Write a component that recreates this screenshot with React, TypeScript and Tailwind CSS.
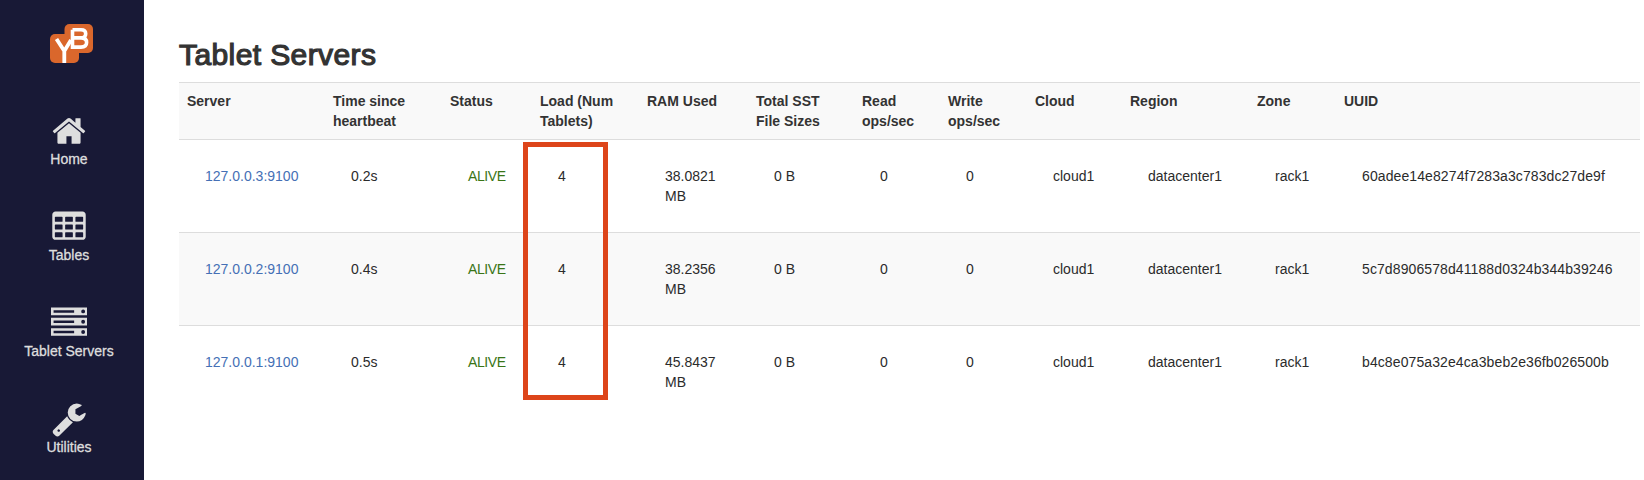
import React from "react";

const HOME =
  "M1472 992v480q0 26-19 45t-45 19h-384v-384h-256v384h-384q-26 0-45-19t-19-45v-480q0-1 .5-3t.5-3l575-474 575 474q1 2 1 6zm223-69l-62 74q-8 9-21 11h-3q-13 0-21-7l-692-577-692 577q-12 8-24 7-13-2-21-11l-62-74q-8-10-7-23.5t11-21.5l719-599q32-26 76-26t76 26l244 204v-195q0-14 9-23t23-9h192q14 0 23 9t9 23v408l219 182q10 8 11 21.5t-7 23.5z";
const TABLE =
  "M224 128h1344q66 0 113 47t47 113v1088q0 66-47 113t-113 47h-1344q-66 0-113-47t-47-113v-1088q0-66 47-113t113-47zM224 384q-32 0-32 32v192q0 32 32 32h320q32 0 32-32v-192q0-32-32-32zM736 384q-32 0-32 32v192q0 32 32 32h320q32 0 32-32v-192q0-32-32-32zM1248 384q-32 0-32 32v192q0 32 32 32h320q32 0 32-32v-192q0-32-32-32zM224 768q-32 0-32 32v192q0 32 32 32h320q32 0 32-32v-192q0-32-32-32zM736 768q-32 0-32 32v192q0 32 32 32h320q32 0 32-32v-192q0-32-32-32zM1248 768q-32 0-32 32v192q0 32 32 32h320q32 0 32-32v-192q0-32-32-32zM224 1152q-32 0-32 32v192q0 32 32 32h320q32 0 32-32v-192q0-32-32-32zM736 1152q-32 0-32 32v192q0 32 32 32h320q32 0 32-32v-192q0-32-32-32zM1248 1152q-32 0-32 32v192q0 32 32 32h320q32 0 32-32v-192q0-32-32-32z";
const SERVER =
  "M0 128h1792v384h-1792zM128 256v128h1024v-128zM1600 224a96 96 0 1 0 0 192a96 96 0 1 0 0-192zM0 640h1792v384h-1792zM128 768v128h1024v-128zM1600 736a96 96 0 1 0 0 192a96 96 0 1 0 0-192zM0 1152h1792v384h-1792zM128 1280v128h1024v-128zM1600 1248a96 96 0 1 0 0 192a96 96 0 1 0 0-192z";
const WRENCH =
  "M448 1472q0-26-19-45t-45-19-45 19-19 45 19 45 45 19 45-19 19-45zm644-420l-682 682q-37 37-90 37-52 0-91-37l-106-108q-38-36-38-90 0-53 38-91l681-681q39 98 114.5 173.5t173.5 114.5zm634-435q0 39-23 106-47 134-164.5 217.5t-258.5 83.5q-185 0-316.5-131.5t-131.5-316.5 131.5-316.5 316.5-131.5q58 0 121.5 16.5t107.5 46.5q16 11 16 28t-16 28l-293 169v224l193 107q5-3 79-48.5t135.5-81 70.5-35.5q15 0 23.5 10t8.5 25z";

const NAV = [
  { label: "Home", path: HOME },
  { label: "Tables", path: TABLE },
  { label: "Tablet Servers", path: SERVER },
  { label: "Utilities", path: WRENCH },
];

const HEADERS = [
  "Server", "Time since heartbeat", "Status", "Load (Num Tablets)", "RAM Used",
  "Total SST File Sizes", "Read ops/sec", "Write ops/sec", "Cloud", "Region", "Zone", "UUID",
];

const ROWS = [
  ["127.0.0.3:9100", "0.2s", "ALIVE", "4", "38.0821 MB", "0 B", "0", "0", "cloud1", "datacenter1", "rack1", "60adee14e8274f7283a3c783dc27de9f"],
  ["127.0.0.2:9100", "0.4s", "ALIVE", "4", "38.2356 MB", "0 B", "0", "0", "cloud1", "datacenter1", "rack1", "5c7d8906578d41188d0324b344b39246"],
  ["127.0.0.1:9100", "0.5s", "ALIVE", "4", "45.8437 MB", "0 B", "0", "0", "cloud1", "datacenter1", "rack1", "b4c8e075a32e4ca3beb2e36fb026500b"],
];

const CELL_STYLES: Record<number, string> = {
  0: "text-[#4570b5]",
  2: "text-[#3a7516] tracking-[-0.400px]",
  11: "tracking-[0.100px]",
};

const GRID =
  "grid grid-cols-[146px_117px_90px_107px_109px_106px_86px_87px_95px_127px_87px_1fr] border-t border-[#ddd]";

function Logo() {
  return (
    <svg width="44" height="40" viewBox="0 0 44 40" className="mt-6 ml-[50px] block shrink-0">
      <rect x="14.500" y="0" width="28.500" height="29" rx="5" fill="#da672c" />
      <rect x="0" y="10" width="29" height="29" rx="5" fill="#da672c" />
      <path d="M6.500 15L14.300 27V39M14.300 27L21 16" stroke="#fff" strokeWidth="3.800" fill="none" />
      <path d="M22.500 5.800H31Q35.700 5.800 35.700 9.800T31 13.900H22.500M31 13.900Q36.600 13.900 36.600 18.500T31 23.100H22.500V5.800" stroke="#fff" strokeWidth="3.600" fill="none" />
    </svg>
  );
}

export default function App() {
  return (
    <div className="flex h-[480px] w-[1644px] overflow-hidden bg-white font-['Liberation_Sans',Arial,sans-serif] text-sm leading-5 text-[#333]">
      <aside className="flex w-36 shrink-0 flex-col bg-[#181936]">
        <Logo />
        <nav className="mt-[20px] flex flex-col text-[#dedede]">
          {NAV.map((n) => (
            <a key={n.label} className="flex h-24 w-[144px] flex-col items-center pt-[29px] pr-1.5">
              <svg width="36" height="36" viewBox="0 0 1792 1792" fill="currentColor" fillRule="evenodd" className="block shrink-0">
                <path d={n.path} />
              </svg>
              <span className="whitespace-nowrap [-webkit-text-stroke:0.300px_currentColor]">{n.label}</span>
            </a>
          ))}
        </nav>
      </aside>
      <main className="flex-1 pt-[38px] pr-1 pl-[35px]">
        <h2 className="h-[44px] text-[30px] leading-[33px] font-medium tracking-[0.400px] [-webkit-text-stroke:1.200px_currentColor]">Tablet Servers</h2>
        <div className="relative">
          <div className={GRID + " h-[57px] bg-[#f9f9f9]"}>
            {HEADERS.map((h) => (
              <div key={h} className="px-2 pt-2 font-bold">{h}</div>
            ))}
          </div>
          {ROWS.map((r, i) => (
            <div key={r[0]} className={GRID + " h-[93px] text-[#2b2b2b] " + (i === 1 ? "bg-[#f9f9f9]" : "bg-white")}>
              {r.map((c, j) => (
                <div key={j} className={"pt-[26px] pr-4 pl-[26px] " + (CELL_STYLES[j] ?? "")}>
                  {c}
                </div>
              ))}
            </div>
          ))}
          <div className="absolute top-[60px] left-[344px] h-[258px] w-[85px] border-[5px] border-[#dd451a]" />
        </div>
      </main>
    </div>
  );
}
